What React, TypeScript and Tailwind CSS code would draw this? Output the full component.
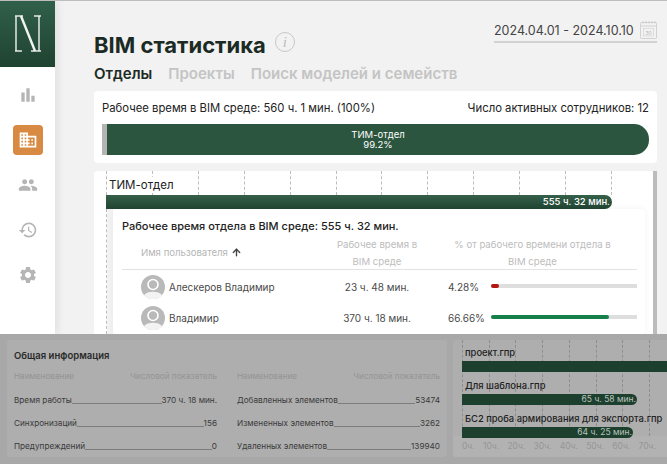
import React from 'react';
import { MdBarChart, MdDomain, MdPeople, MdHistory, MdSettings } from 'react-icons/md';
import { ArrowUp } from 'lucide-react';

const Logo = () => (
  <svg width="28" height="38" viewBox="0 0 28 38" fill="none" stroke="#f1f4f2">
    <path d="M2 1v35" strokeWidth="1.4" />
    <path d="M1 1h8" strokeWidth="1.4" />
    <path d="M1 36h7" strokeWidth="1.4" />
    <path d="M7 1l14 35" strokeWidth="2.4" />
    <path d="M25 1v35" strokeWidth="1.4" />
    <path d="M20 1h7" strokeWidth="1.4" />
    <path d="M17 36h10" strokeWidth="1.4" />
  </svg>
);

const Calendar = () => (
  <svg width="17" height="19" viewBox="0 0 17 19" fill="none" stroke="#c9c9c9" strokeWidth="0.8">
    <rect x="0.5" y="2.5" width="16" height="16" rx="1" />
    <path d="M0.5 6h16" />
    <path d="M3 1v2.5M6 1v2.5M9 1v2.5M12 1v2.5M15 1v2.5" />
    <rect x="3.5" y="8.5" width="10" height="7.5" strokeWidth="0.5" />
    <text x="8.5" y="14.5" textAnchor="middle" fontSize="5" fill="#b5b5b5" stroke="none">30</text>
  </svg>
);

const Avatar = () => (
  <svg width="24" height="24" viewBox="0 0 24 24" className="shrink-0">
    <circle cx="12" cy="12" r="12" fill="#b9b9b9" />
    <circle cx="12" cy="9.5" r="5" fill="none" stroke="#fff" strokeWidth="1.6" />
    <path d="M3 20c3-4.500 15-4.500 18 0c-4 5.500-14 5.500-18 0z" fill="#f3f3f3" />
  </svg>
);

const navIcons = [MdHistory, MdSettings];

const users = [
  { name: 'Алескеров Владимир', time: '23 ч. 48 мин.', pct: '4.28%', width: '5.5%', color: 'bg-[#b3160f]' },
  { name: 'Владимир', time: '370 ч. 18 мин.', pct: '66.66%', width: '81%', color: 'bg-[#15804a]' },
];

const leftInfo = [
  ['Время работы', '370 ч. 18 мин.'],
  ['Синхронизаций', '156'],
  ['Предупреждений', '0'],
];

const rightInfo = [
  ['Добавленных элементов', '53474'],
  ['Измененных элементов', '3262'],
  ['Удаленных элементов', '139940'],
];

const InfoColumn = ({ rows }: { rows: string[][] }) => (
  <div className="w-[203px]">
    <div className="flex justify-between text-[8.2px] leading-[12px] text-[#949494] mb-[12px]">
      <span>Наименование</span>
      <span>Числовой показатель</span>
    </div>
    <div className="flex flex-col gap-[11px]">
      {rows.map(([label, value]) => (
        <div key={label} className="flex items-end text-[8.2px] leading-[12px] text-[#3a3a3a]">
          <span>{label}</span>
          <span className="flex-1 border-b border-[#7c7c7c] mb-[2px]" />
          <span>{value}</span>
        </div>
      ))}
    </div>
  </div>
);

const files = [
  { name: 'проект.гпр', width: 'w-[230px]', label: '', mb: 'mb-[7px]' },
  { name: 'Для шаблона.гпр', width: 'w-[175px]', label: '65 ч. 58 мин.', mb: 'mb-[7px]' },
  { name: 'БС2 проба армирования для экспорта.гпр', width: 'w-[171px]', label: '64 ч. 25 мин.', mb: 'mb-0' },
];

const axis = ['0ч.', '10ч.', '20ч.', '30ч.', '40ч.', '50ч.', '60ч.', '70ч.'];

export default function App() {
  return (
    <div className="w-[667px] h-[464px] overflow-hidden flex flex-col bg-[#f2f2f2] font-['Inter','Liberation_Sans',sans-serif]">
      <div className="h-[1px] shrink-0 bg-[#bdbdbd]" />
      <div className="h-[333px] shrink-0 flex overflow-hidden">
        {/* Sidebar */}
        <aside className="w-[55px] shrink-0 bg-white flex flex-col shadow-[3px_0_8px_rgba(0,0,0,0.07)] z-10">
          <div className="h-[66px] shrink-0 flex items-center justify-center bg-gradient-to-b from-[#31604a] to-[#1f4331]">
            <Logo />
          </div>
          <div className="flex flex-col items-center pt-[13px] gap-[15px]">
            <div className="h-[30px] flex items-center justify-center">
              <MdBarChart size={20} color="#b5b5b5" />
            </div>
            <div className="w-[30px] h-[30px] rounded-[4px] bg-[#d98a42] flex items-center justify-center">
              <MdDomain size={20} color="#fff" />
            </div>
            <div className="h-[30px] flex items-center justify-center">
              <MdPeople size={20} color="#b5b5b5" />
            </div>
            {navIcons.map((Icon, i) => (
              <div key={i} className="h-[30px] flex items-center justify-center">
                <Icon size={20} color="#b5b5b5" />
              </div>
            ))}
          </div>
        </aside>

        {/* Content */}
        <main className="flex-1 min-w-0 pl-[39px] pr-[10px] flex flex-col">
          <div className="h-[57px] shrink-0 flex justify-between">
            <div className="flex items-start pt-[30px]">
              <h1 className="text-[22px] leading-[29px] font-bold text-[#1b2b24]">BIM статистика</h1>
              <span className="ml-[9px] mt-[1px] w-[20px] h-[20px] rounded-full border border-[#c8c8c8] flex items-center justify-center text-[#bdbdbd] text-[15px] italic font-['Liberation_Serif',serif]">i</span>
            </div>
            <div className="w-[163px] h-[22px] mt-[20px] flex items-end justify-between border-b-2 border-[#d2d2d2] pb-[2px]">
              <span className="text-[12.5px] leading-[17px] text-[#444]">2024.04.01 - 2024.10.10</span>
              <Calendar />
            </div>
          </div>

          <div className="h-[33px] shrink-0 flex gap-[16px] items-start pt-[7px] text-[15px] leading-[18px] font-semibold text-[#c4c4c4]">
            <span className="text-[#1b2b24]">Отделы</span>
            <span>Проекты</span>
            <span>Поиск моделей и семейств</span>
          </div>

          {/* Summary card */}
          <section className="h-[72px] shrink-0 bg-white rounded-[4px] px-[8px] pt-[10px]">
            <div className="flex justify-between text-[11.3px] leading-[15px] text-[#222]">
              <span>Рабочее время в BIM среде: 560 ч. 1 мин. (100%)</span>
              <span>Число активных сотрудников: 12</span>
            </div>
            <div className="flex h-[31px] mt-[8px]">
              <div className="w-[5px] bg-[#b4b4b4]" />
              <div className="flex-1 rounded-r-[15px] bg-[#2b553e] flex flex-col items-center justify-center text-white text-[9.500px] leading-[10px]">
                <span>ТИМ-отдел</span>
                <span>99.2%</span>
              </div>
            </div>
          </section>

          {/* Department card */}
          <section className="mt-[8px] flex-1 min-h-0 bg-white rounded-t-[4px] pl-[12px] flex relative">
            <div className="flex-1 min-w-0 flex flex-col">
              <div className="h-[24px] shrink-0 relative w-[506px]">
                <div className="absolute inset-0 flex justify-between">
                  {Array.from({ length: 12 }).map((_, i) => (
                    <span key={i} className="border-l border-dashed border-[#bdbdbd]" />
                  ))}
                </div>
                <span className="absolute left-[3px] top-[6px] text-[11.500px] leading-[16px] text-[#222] bg-white">ТИМ-отдел</span>
              </div>
              <div className="h-[14px] shrink-0 w-[506px] rounded-r-[7px] bg-gradient-to-b from-[#356049] to-[#214533] flex items-center justify-end pr-[2px] text-white text-[9.500px] font-medium">
                555 ч. 32 мин.
              </div>
              <div className="flex-1 min-h-0 flex border-l border-dashed border-[#bdbdbd]">
                <div className="w-[6px] shrink-0 bg-[#f3f3f3]" />
                <div className="w-[532px] shrink-0 bg-white rounded-[4px] shadow-[0_0_6px_rgba(0,0,0,0.06)] pl-[9px] pr-[8px] pt-[8px]">
                  <div className="text-[11px] leading-[19px] font-medium text-[#222]">Рабочее время отдела в BIM среде: 555 ч. 32 мин.</div>
                  <div className="flex h-[34px] border-b border-[#e2e2e2] text-[9.600px] leading-[17px] text-[#bcbcbc]">
                    <div className="w-[190px] pl-[19px] flex items-center text-[#b5b5b5]">
                      Имя пользователя
                      <ArrowUp size={11} color="#444" strokeWidth={3} className="ml-[3px]" />
                    </div>
                    <div className="w-[130px] text-center">Рабочее время в<br />BIM среде</div>
                    <div className="flex-1 text-center pr-[20px] pl-[6px]">% от рабочего времени отдела в<br />BIM среде</div>
                  </div>
                  <div className="flex flex-col gap-[7px] pt-[5px]">
                    {users.map(u => (
                      <div key={u.name} className="h-[24px] flex items-center text-[10px] text-[#4a4a4a]">
                        <div className="w-[190px] pl-[19px] flex items-center gap-[4px]">
                          <Avatar />
                          <span>{u.name}</span>
                        </div>
                        <div className="w-[130px] text-center">{u.time}</div>
                        <div className="w-[49px] pl-[6px] shrink-0 whitespace-nowrap">{u.pct}</div>
                        <div className="flex-1 h-[4px] mb-[3px] bg-[#dedede] rounded-l-full">
                          <div className={`h-full rounded-full ${u.color}`} style={{ width: u.width }} />
                        </div>
                      </div>
                    ))}
                  </div>
                </div>
              </div>
            </div>
            <div className="absolute right-0 top-0 bottom-0 w-[4px] bg-[#bcbcbc]" />
          </section>
        </main>
      </div>

      {/* Dimmed lower panels */}
      <div className="flex-1 min-h-0 bg-[#a8a8a8] pt-[6px] pb-[7px] pl-[7px] flex gap-[6px]">
        <section className="w-[440px] shrink-0 bg-[#aeaeae] rounded-[3px] px-[7px] pt-[9px]">
          <div className="text-[9.500px] leading-[14px] font-semibold text-[#2a2a2a]">Общая информация</div>
          <div className="flex justify-between mt-[7px]">
            <InfoColumn rows={leftInfo} />
            <InfoColumn rows={rightInfo} />
          </div>
        </section>
        <section className="flex-1 min-w-0 bg-[#aeaeae] rounded-l-[3px] flex flex-col overflow-hidden">
          <div className="flex-1 min-h-0 relative pl-[9px] pt-[6px]">
            <div className="absolute top-0 bottom-0 left-[9px] w-[188px] flex justify-between">
              {axis.map(a => (
                <span key={a} className="border-l border-dashed border-[#8e8e8e]" />
              ))}
            </div>
            <div className="relative flex flex-col">
              {files.map(f => (
                <div key={f.name} className={f.mb}>
                  <div className="pl-[3px] text-[9.400px] leading-[13px] mb-[2px] font-medium text-[#222] whitespace-nowrap">{f.name}</div>
                  <div className={`h-[11px] ${f.width} rounded-r-[6px] bg-[#1d3f2e] flex items-center justify-end pr-[1px] text-[8.500px] text-[#b9c4bd]`}>{f.label}</div>
                </div>
              ))}
            </div>
          </div>
          <div className="h-[21px] shrink-0 bg-[#b2b2b2] pl-[9px] w-[214px] flex items-center justify-between pr-[11px] text-[8.500px] text-[#969696]">
            {axis.map(a => <span key={a}>{a}</span>)}
          </div>
        </section>
      </div>
    </div>
  );
}
